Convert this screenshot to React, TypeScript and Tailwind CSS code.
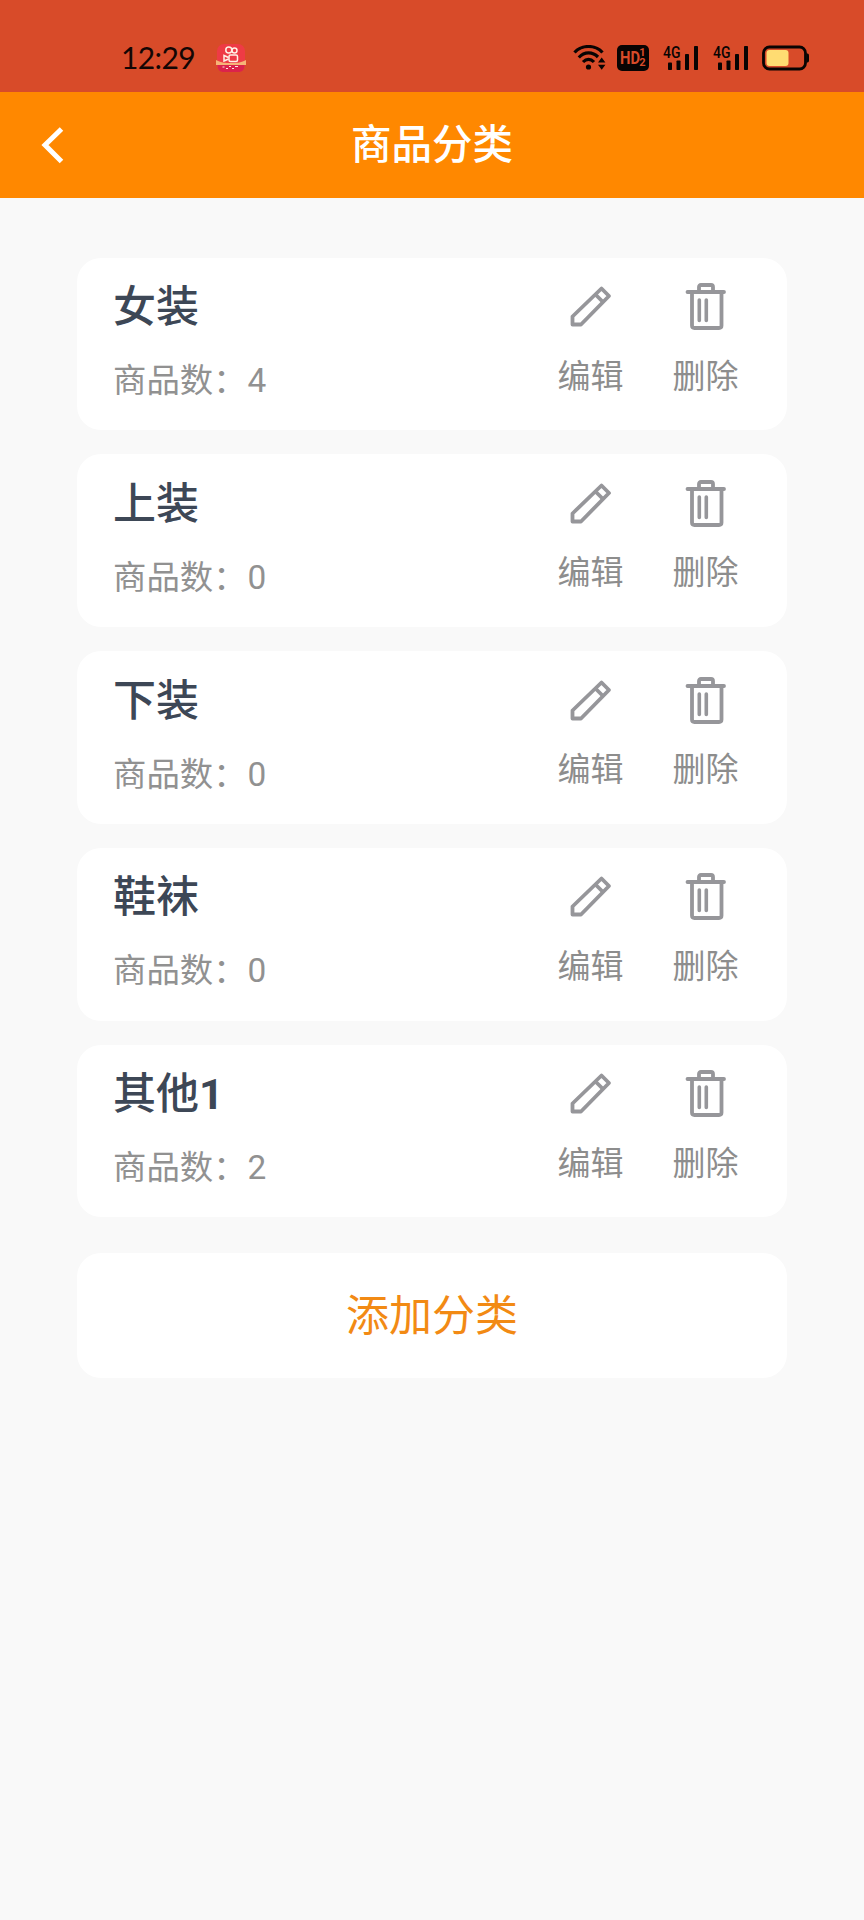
const categories = [
  { name: '女装', suffix: '', count: 4 },
  { name: '上装', suffix: '', count: 0 },
  { name: '下装', suffix: '', count: 0 },
  { name: '鞋袜', suffix: '', count: 0 },
  { name: '其他', suffix: '1', count: 2 },
];

function AppBadge() {
  return (
    <svg className="ml-[21px] h-[30px] w-[30px]" viewBox="0 0 30 30" fill="none">
      <rect x="1" y="1" width="28" height="28" rx="7" fill="#ee3b45" />
      <path d="M0 17c6 3 9 3 15 3s9 0 15-3v5H0z" fill="#f6b477" />
      <path d="M1.500 22h27c0 4.500-2 7-6.500 7H8c-4.500 0-6.500-2.500-6.500-7z" fill="#db234b" />
      <path d="M6.500 24h2m1.500 1.500h2m1-2h2m1 2h2m1-2h3" stroke="#ffe2df" strokeWidth="1.200" />
      <g stroke="#fff1e5" strokeWidth="1.500">
        <circle cx="12.800" cy="7" r="3" />
        <circle cx="18.500" cy="7.500" r="2.500" />
        <rect x="13" y="12" width="8.500" height="6.500" rx="1.500" />
        <path d="M12.500 14.500L8 12.500v5.500l4.500-2" />
      </g>
    </svg>
  );
}

function WifiIcon() {
  return (
    <svg className="h-[26px] w-[33px]" viewBox="0 0 33 26" fill="none" stroke="#080403" strokeWidth="3.200">
      <path d="M1.500 7.500C9-.5 22-.5 29.500 7.500" />
      <path d="M5.800 12.500C11.500 6.500 19.500 6.500 25 12" />
      <path d="M10 17c3.500-3.600 7.500-3.600 11 0" />
      <circle cx="15.500" cy="22" r="2.600" fill="#080403" stroke="none" />
      <path d="M25 17.500l3.700-5 3.700 5zM25 19.700h7.400l-3.700 5z" fill="#080403" stroke="none" />
    </svg>
  );
}

function HdIcon() {
  return (
    <div className="ml-[11px] flex h-[26px] w-[32px] items-center justify-center gap-[1px] rounded-[5px] bg-[#080403] font-bold text-[#d84b29]">
      <span className="w-[18px] origin-left scale-x-[0.82] text-[18px] leading-[22px]">HD</span>
      <span className="flex flex-col text-[11px] leading-[10px]">
        <span>1</span>
        <span>2</span>
      </span>
    </div>
  );
}

function SignalIcon() {
  return (
    <svg className="-ml-[1px] h-[28px] w-[37px] overflow-visible" viewBox="-1 -1 37 28" fill="#080403">
      <text x="0" y="12.500" fontSize="16" fontFamily="Roboto, sans-serif" fontWeight="500" textLength="17.500" lengthAdjust="spacingAndGlyphs">4G</text>
      <rect x="5" y="17.500" width="4" height="7.500" rx="0.800" />
      <rect x="13.500" y="15.500" width="4" height="9.500" rx="0.800" />
      <rect x="22" y="9" width="4" height="16" rx="0.800" />
      <rect x="31" y="1" width="4" height="24" rx="0.800" />
    </svg>
  );
}

function BatteryIcon() {
  return (
    <svg className="ml-[13px] h-[26px] w-[48px]" viewBox="0 0 48 26" fill="none">
      <rect x="1.500" y="2" width="42" height="22" rx="6" stroke="#080403" strokeWidth="2.800" />
      <rect x="4.500" y="5" width="22" height="16" rx="3" fill="#ffdc72" />
      <path d="M44.500 8.500h1q1.500 0 1.500 2v5q0 2-1.500 2h-1z" fill="#080403" />
    </svg>
  );
}

function PencilIcon() {
  return (
    <svg className="h-12 w-12" viewBox="0 0 48 48" fill="none" stroke="#96969a" strokeWidth="3.800" strokeLinejoin="round">
      <path d="M5.500 33.500L34.500 5.500l7.500 7.500L14 41.500H5.500z" />
      <path d="M28.500 11.500l7.500 7.500" />
    </svg>
  );
}

function TrashIcon() {
  return (
    <svg className="h-12 w-12" viewBox="0 0 48 48" fill="none" stroke="#96969a" strokeWidth="3.800" strokeLinecap="round" strokeLinejoin="round">
      <path d="M5.500 9h36.500M17 8.500V4q0-2 2-2h10q2 0 2 2v4.500" />
      <path d="M10 9.500v33q0 2.500 2.500 2.500h24.500q2.500 0 2.500-2.500V9.500" />
      <path d="M17.300 17v20.500M24.300 17v20.500" strokeWidth="3.600" />
    </svg>
  );
}

export default function App() {
  return (
    <div className="flex min-h-[1920px] w-[864px] flex-col bg-[#f9f9f9] font-['Roboto','Noto_Sans_CJK_SC',sans-serif]">
      <div className="flex h-[92px] items-center bg-[#d84b29] pt-[23px] pr-[54px] pl-[121px]">
        <span className="pb-[2px] font-['Lato',sans-serif] text-[30px] leading-[34px] tracking-[-0.6px] text-[#140604]">12:29</span>
        <AppBadge />
        <div className="ml-auto flex items-center">
          <WifiIcon />
          <HdIcon />
          <div className="ml-[14px] flex gap-[14px]">
            <SignalIcon />
            <SignalIcon />
          </div>
          <BatteryIcon />
        </div>
      </div>
      <header className="grid h-[105.500px] grid-cols-[1fr_auto_1fr] items-center bg-[#ff8800] text-white">
        <svg className="ml-[40px] h-[38px] w-[26px]" viewBox="0 0 26 38" fill="none" stroke="currentColor" strokeWidth="5">
          <path d="M21.500 3L5 19l16.500 16.500" />
        </svg>
        <h1 className="text-[40.500px] leading-[60px] font-medium">商品分类</h1>
      </header>
      <main className="flex flex-col px-[77px] pt-[60px]">
        <ul className="flex flex-col gap-[24px]">
          {categories.map((c) => (
            <li key={c.name} className="flex h-[172.800px] justify-between rounded-[24px] bg-white pr-[48.500px] pl-[36px]">
              <div className="flex flex-col pt-[19.500px]">
                <h2 className="text-[43px] leading-[60px] font-medium text-[#3d4756]">
                  {c.name}
                  <b className="font-bold">{c.suffix}</b>
                </h2>
                <p className="mt-[20px] text-[33.400px] leading-[48px] text-[#919191]">
                  商品数：<span className="ml-[1px]">{c.count}</span>
                </p>
              </div>
              <div className="flex gap-[49px] pt-[25.500px] text-[33px] leading-[48px] text-[#8d8d8d]">
                <button className="flex flex-col items-center gap-[21.500px] self-start">
                  <PencilIcon />
                  <span>编辑</span>
                </button>
                <button className="flex flex-col items-center gap-[21.500px] self-start">
                  <TrashIcon />
                  <span>删除</span>
                </button>
              </div>
            </li>
          ))}
        </ul>
        <button className="mt-[36px] h-[125px] rounded-[24px] bg-white text-[43px] text-[#f28a14]">添加分类</button>
      </main>
    </div>
  );
}
